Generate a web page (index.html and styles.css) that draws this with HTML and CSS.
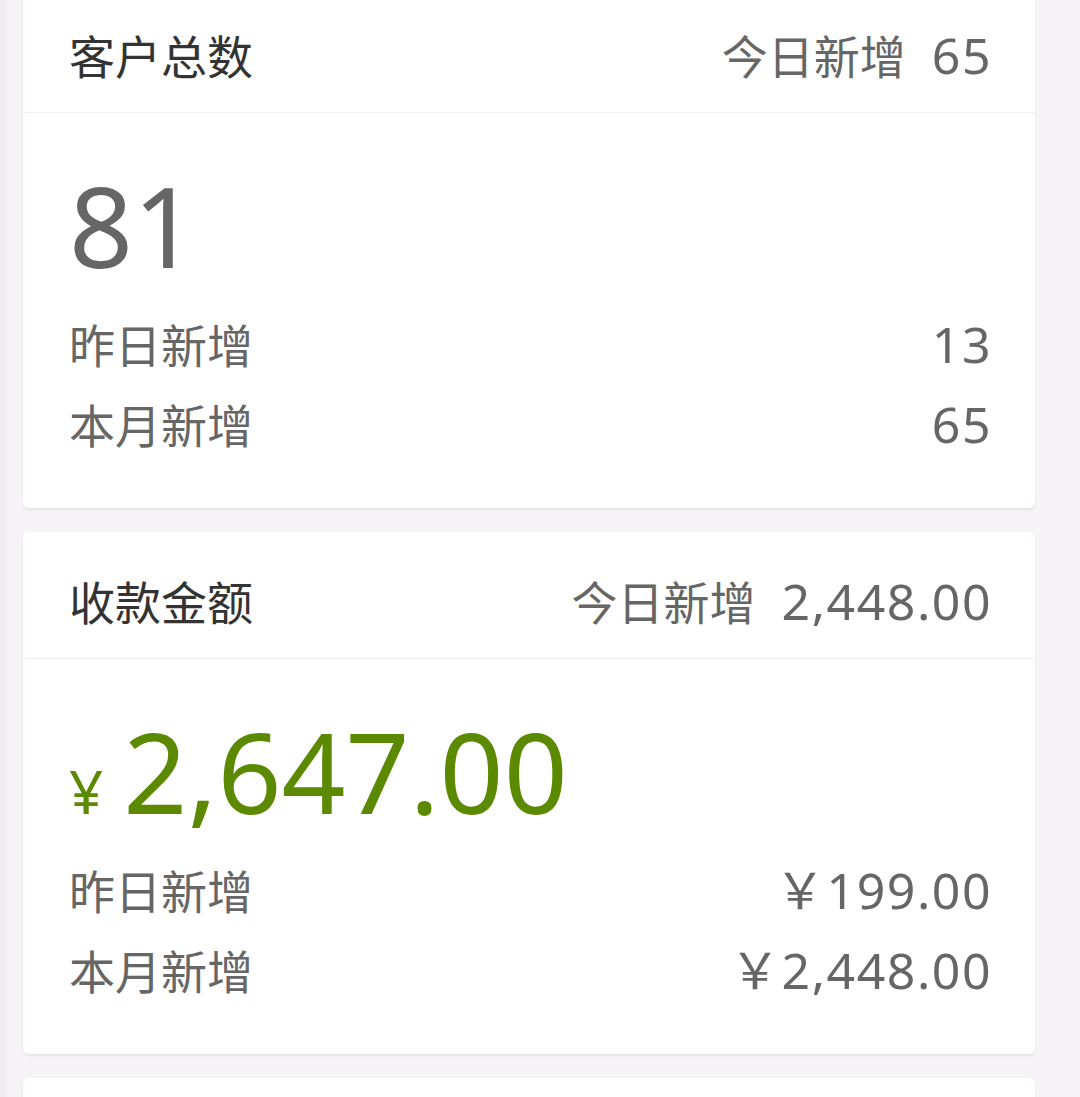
FILE: index.html
```html
<!DOCTYPE html>
<html lang="zh-CN">
<head>
<meta charset="utf-8">
<title>统计</title>
<link rel="stylesheet" href="styles.css">
</head>
<body>
<div class="list">

	<div class="card">
		<div class="card-head">
			<div class="card-title">客户总数</div>
			<div class="card-extra">今日新增<span class="num extra-num">65</span></div>
		</div>
		<div class="card-body">
			<div class="total">81</div>
			<div class="row"><span>昨日新增</span><span class="num">13</span></div>
			<div class="row"><span>本月新增</span><span class="num">65</span></div>
		</div>
	</div>

	<div class="card">
		<div class="card-head">
			<div class="card-title">收款金额</div>
			<div class="card-extra">今日新增<span class="num extra-num">2,448.00</span></div>
		</div>
		<div class="card-body">
			<div class="total money"><span class="unit">¥</span>2,647.00</div>
			<div class="row"><span>昨日新增</span><span class="num">￥199.00</span></div>
			<div class="row"><span>本月新增</span><span class="num">￥2,448.00</span></div>
		</div>
	</div>

	<div class="card card-empty"></div>

</div>
</body>
</html>
```

FILE: styles.css
```css
body {
	margin: 0;
	padding: 0;
	background: linear-gradient(to right, #efedef 0, #efedef 7px, #f7f4f7 7px);
	font-family: "Noto Sans", "Noto Sans CJK SC", sans-serif;
	color: #666;
}

.list {
	display: flex;
	flex-direction: column;
	gap: 24px;
	margin-top: -14px;
	padding: 0 45px 0 23px;
}

.card {
	background: #fff;
	border-radius: 6px;
	box-shadow: 0 2px 3px rgba(0, 0, 0, 0.07);
}

.card-head {
	display: flex;
	justify-content: space-between;
	padding: 44px 43px 30px 46px;
	border-bottom: 1px solid #f1eff1;
	font-size: 46px;
	line-height: 52px;
	white-space: nowrap;
}

.card-title {
	color: #333;
}

.card-extra {
	color: #666;
}

.num {
	font-size: 50px;
	line-height: 1;
	letter-spacing: 1.5px;
	white-space: nowrap;
}

.extra-num {
	margin-left: 26px;
}

.card-body {
	padding: 56px 43px 43px 46px;
}

.total {
	font-size: 112px;
	line-height: 112px;
	color: #666;
	margin-bottom: 24px;
}

.money {
	color: #5b8a00;
}

.unit {
	font-size: 60px;
	line-height: 1;
	margin-right: 20px;
}

.row {
	display: flex;
	justify-content: space-between;
	align-items: baseline;
	font-size: 46px;
	line-height: 80px;
}

.card-empty {
	height: 300px;
}
```
